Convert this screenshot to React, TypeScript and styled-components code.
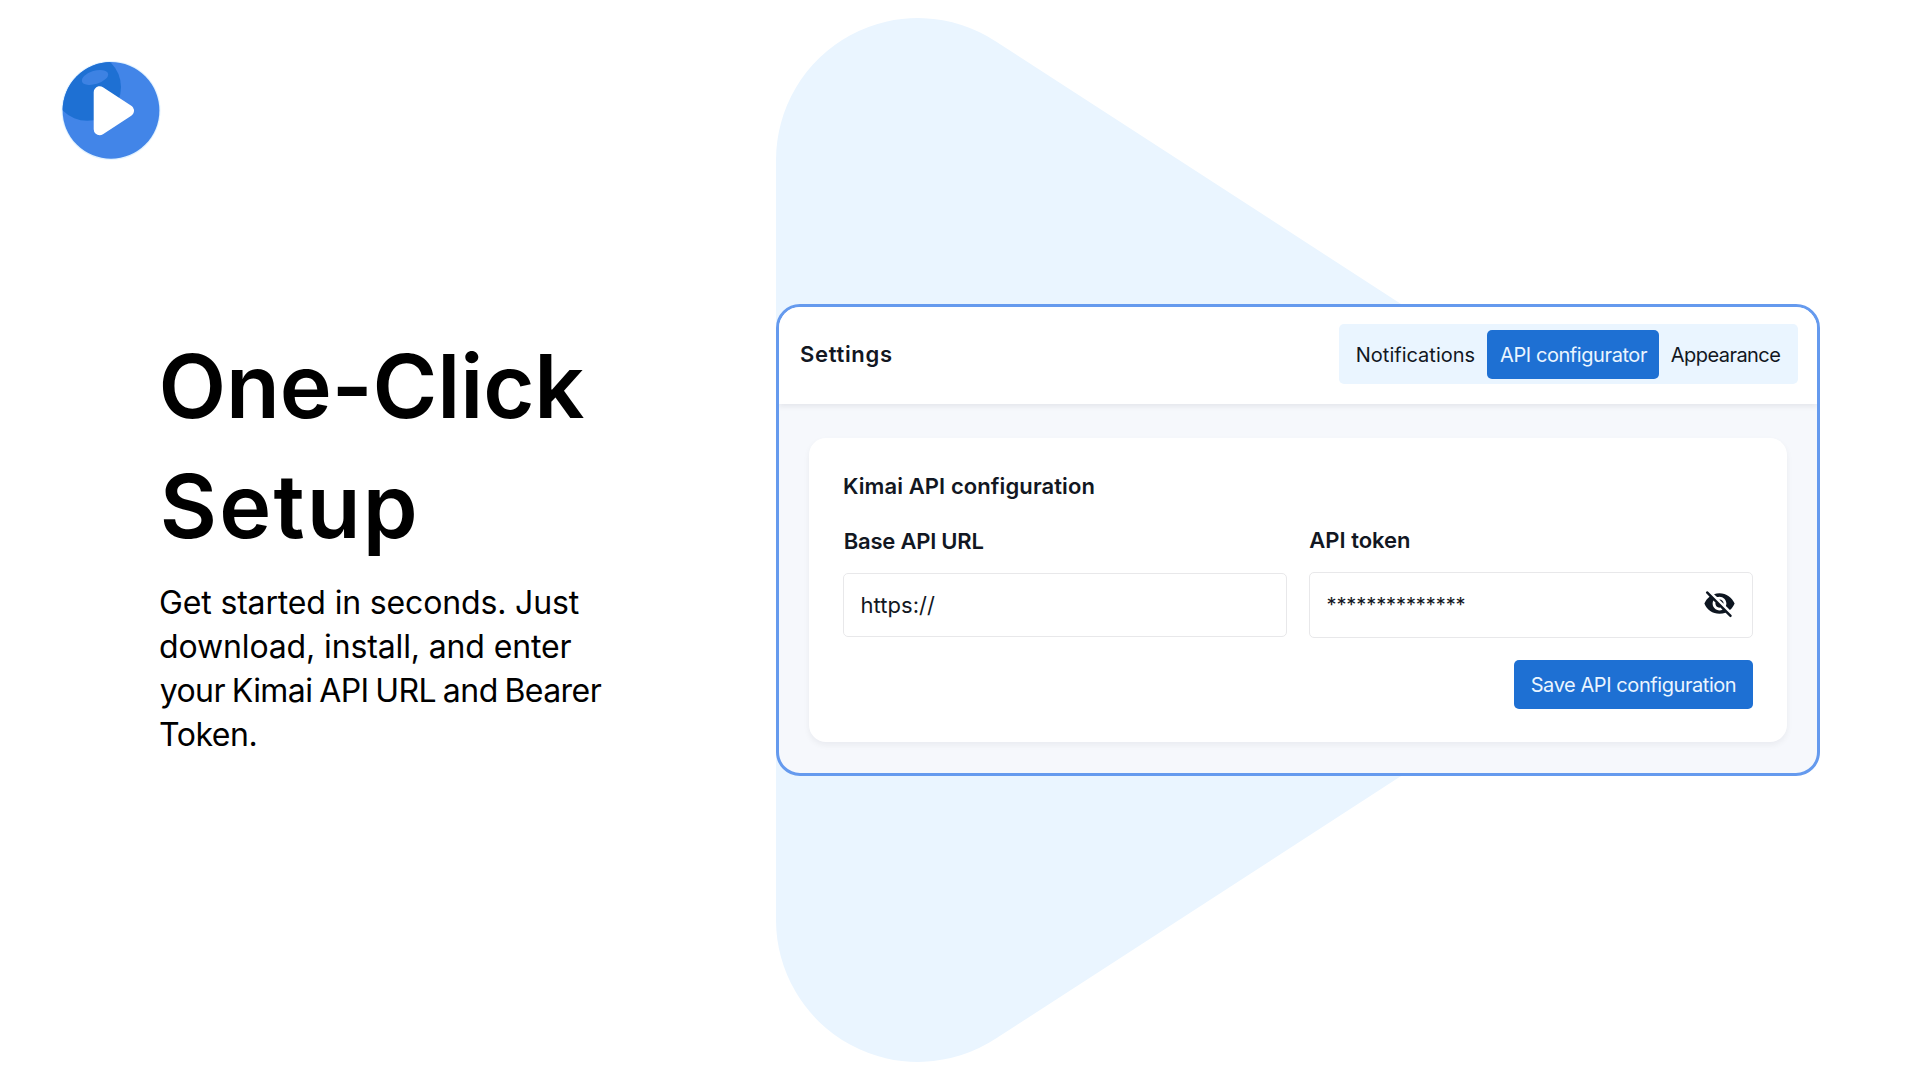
import React from 'react';
import styled, { createGlobalStyle } from 'styled-components';

const GlobalStyle = createGlobalStyle`
  *, *::before, *::after { box-sizing: border-box; }
  body {
    margin: 0;
    background: #fff;
    font-family: Inter, "Liberation Sans", sans-serif;
    color: #121722;
  }
  h1, h2, h3, p { margin: 0; }
`;

const Page = styled.main`
  display: grid;
  grid-template-columns: 776px 1044px;
  width: 1920px;
  height: 1080px;
  overflow: hidden;
  background: #fff;
`;

const Intro = styled.section`
  display: flex;
  flex-direction: column;
  padding-top: 60px;
`;

const Logo = styled.svg`
  flex: none;
  width: 100px;
  height: 100px;
  margin-left: 61px;
`;

const Copy = styled.div`
  display: flex;
  flex-direction: column;
  gap: 15px;
  margin-top: 166px;
  padding-left: 159px;
  color: #000;
`;

const Headline = styled.h1`
  margin-left: -1px;
  font-size: 88px;
  font-weight: 600;
  line-height: 120px;
`;

const Lead = styled.p`
  font-size: 32px;
  line-height: 44px;
`;

const Line = styled.span<{ $track?: number; $word?: number; $indent?: number }>`
  display: block;
  white-space: nowrap;
  letter-spacing: ${(p) => p.$track ?? 0}px;
  word-spacing: ${(p) => p.$word ?? 0}px;
  margin-left: ${(p) => p.$indent ?? 0}px;
`;

const Stage = styled.section`
  position: relative;
  display: flex;
  align-items: center;
`;

const Backdrop = styled.svg`
  position: absolute;
  inset: 0;
  width: 1044px;
  height: 1080px;
`;

const Window = styled.div`
  position: relative;
  display: flex;
  flex-direction: column;
  width: 1044px;
  height: 472px;
  border: 3px solid #659aee;
  border-radius: 24px;
  background: #f6f8fc;
  overflow: hidden;
`;

const Header = styled.header`
  display: flex;
  align-items: flex-start;
  justify-content: space-between;
  height: 97px;
  padding: 17px 19.5px 0 21px;
  background: #fff;
  box-shadow: 0 3px 5px rgba(20, 20, 30, 0.065);
`;

const Heading = styled.h2<{ $track?: number; $tall?: boolean; $indent?: number }>`
  margin-left: ${(p) => p.$indent ?? 0}px;
  font-size: 22px;
  font-weight: 600;
  line-height: ${(p) => (p.$tall ? 60 : 28)}px;
  letter-spacing: ${(p) => p.$track ?? 0}px;
  white-space: nowrap;
`;

const Tabs = styled.nav`
  display: grid;
  grid-template-columns: 143.5px 171.5px 134px;
  width: 459px;
  height: 60px;
  padding: 6px 5px 5px;
  border-radius: 5px;
  background: #eaf5ff;
`;

const Tab = styled.div<{ $active?: boolean; $track?: number }>`
  display: flex;
  align-items: center;
  padding-left: ${(p) => (p.$active ? 13 : 12.3)}px;
  border-radius: 5px;
  background: ${(p) => (p.$active ? '#1e70d3' : 'transparent')};
  color: ${(p) => (p.$active ? '#eaf5ff' : '#121722')};
  font-size: 20px;
  letter-spacing: ${(p) => p.$track ?? 0}px;
  white-space: nowrap;
`;

const Body = styled.div`
  display: flex;
  flex: 1;
  padding: 34px 30.4px 31px 30px;
`;

const Card = styled.form`
  display: flex;
  flex: 1;
  flex-direction: column;
  padding: 34px 34px 33px;
  border-radius: 17px;
  background: #fff;
  box-shadow: 0 3px 6px rgba(20, 20, 30, 0.055);
`;

const Fields = styled.div`
  display: grid;
  grid-template-columns: 444px 444px;
  column-gap: 22px;
  margin-top: 25.5px;
`;

const Field = styled.div<{ $drop?: boolean }>`
  display: flex;
  flex-direction: column;
  gap: 18px;
  padding-top: ${(p) => (p.$drop ? 1.3 : 0)}px;
`;

const Input = styled.div<{ $height: number; $size: number; $track: number }>`
  display: flex;
  align-items: center;
  justify-content: space-between;
  height: ${(p) => p.$height}px;
  padding: 0 15.8px 0 16.5px;
  border: 1px solid #e8e8ea;
  border-radius: 5px;
  font-size: ${(p) => p.$size}px;
  letter-spacing: ${(p) => p.$track}px;
`;

const EyeIcon = styled.svg`
  width: 33px;
  height: 33px;
  margin-bottom: 2px;
  fill: #0d1520;
`;

const SaveButton = styled.button`
  align-self: flex-end;
  width: 239px;
  height: 49px;
  margin-top: auto;
  padding: 1px 0 0;
  border: 0;
  border-radius: 5px;
  background: #1e70d3;
  color: #eaf5ff;
  font: 400 20px Inter, "Liberation Sans", sans-serif;
  letter-spacing: -0.43px;
`;

export default function App() {
  return (
    <>
      <GlobalStyle />
      <Page>
        <Intro>
          <Logo viewBox="0 0 100 100">
            <defs>
              <clipPath id="disc">
                <circle cx="50" cy="50.4" r="48.4" />
              </clipPath>
            </defs>
            <circle cx="50" cy="50.4" r="49.5" fill="#e3f3ff" />
            <circle cx="50" cy="50.4" r="48.4" fill="#4285e8" />
            <g clipPath="url(#disc)">
              <circle cx="26.2" cy="27" r="33.8" fill="#1e70d3" />
            </g>
            <ellipse cx="34" cy="17.4" rx="13.6" ry="6.6" transform="rotate(-17 34 17.4)" fill="#3d82e3" />
            <path
              d="M38.7 32.2 V69.2 L67 50.7 Z"
              fill="#fff"
              stroke="#fff"
              strokeWidth="12"
              strokeLinejoin="round"
            />
          </Logo>
          <Copy>
            <Headline>
              <Line $track={-0.1} $indent={0.5}>One-Click</Line>
              <Line $track={2.2} $indent={1.8}>Setup</Line>
            </Headline>
            <Lead>
              <Line $track={-0.15}>Get started in seconds. Just</Line>
              <Line $track={-0.13}>download, install, and enter</Line>
              <Line $track={-0.56} $word={-1.7} $indent={0.7}>your Kimai API URL and Bearer</Line>
              <Line $track={-0.45}>Token.</Line>
            </Lead>
          </Copy>
        </Intro>

        <Stage>
          <Backdrop viewBox="0 0 1044 1080">
            <path
              d="M0 160.7 A142 142 0 0 1 219.9 41.4 L950 514.6 Q987 540 950 565.4 L219.9 1038.6 A142 142 0 0 1 0 918.7 Z"
              fill="#eaf5ff"
            />
          </Backdrop>
          <Window>
            <Header>
              <Heading as="h1" $tall $track={0.68}>Settings</Heading>
              <Tabs>
                <Tab>Notifications</Tab>
                <Tab $active $track={-0.42}>API configurator</Tab>
                <Tab $track={-0.55}>Appearance</Tab>
              </Tabs>
            </Header>
            <Body>
              <Card>
                <Heading $track={0.09}>Kimai API configuration</Heading>
                <Fields>
                  <Field $drop>
                    <Heading as="h3" $track={-0.23} $indent={0.8}>Base API URL</Heading>
                    <Input $height={64} $size={22} $track={0.05}>https://</Input>
                  </Field>
                  <Field>
                    <Heading as="h3" $track={0} $indent={0.3}>API token</Heading>
                    <Input $height={66.5} $size={20} $track={-0.09}>
                      **************
                      <EyeIcon viewBox="0 0 24 24">
                        <path d="M12 7c2.76 0 5 2.24 5 5 0 .65-.13 1.26-.36 1.83l2.92 2.92c1.51-1.26 2.7-2.89 3.43-4.75-1.73-4.39-6-7.5-11-7.5-1.4 0-2.74.25-3.98.7l2.16 2.16C10.74 7.13 11.35 7 12 7zM2.33 4.6l1.95 1.95.46.46C3.08 8.3 1.78 10.02 1 12c1.73 4.39 6 7.5 11 7.5 1.55 0 3.03-.3 4.38-.84l.42.42L19.4 21.67A.9.9 0 0 0 20.67 20.4L3.6 3.33A.9.9 0 0 0 2.33 4.6zM7.53 9.8l1.55 1.55c-.05.21-.08.43-.08.65 0 1.66 1.34 3 3 3 .22 0 .44-.03.65-.08l1.55 1.55c-.67.33-1.41.53-2.2.53-2.76 0-5-2.24-5-5 0-.79.2-1.53.53-2.2zm4.31-.78l3.15 3.15.02-.16c0-1.66-1.34-3-3-3l-.17.01z" />
                      </EyeIcon>
                    </Input>
                  </Field>
                </Fields>
                <SaveButton type="button">Save API configuration</SaveButton>
              </Card>
            </Body>
          </Window>
        </Stage>
      </Page>
    </>
  );
}
